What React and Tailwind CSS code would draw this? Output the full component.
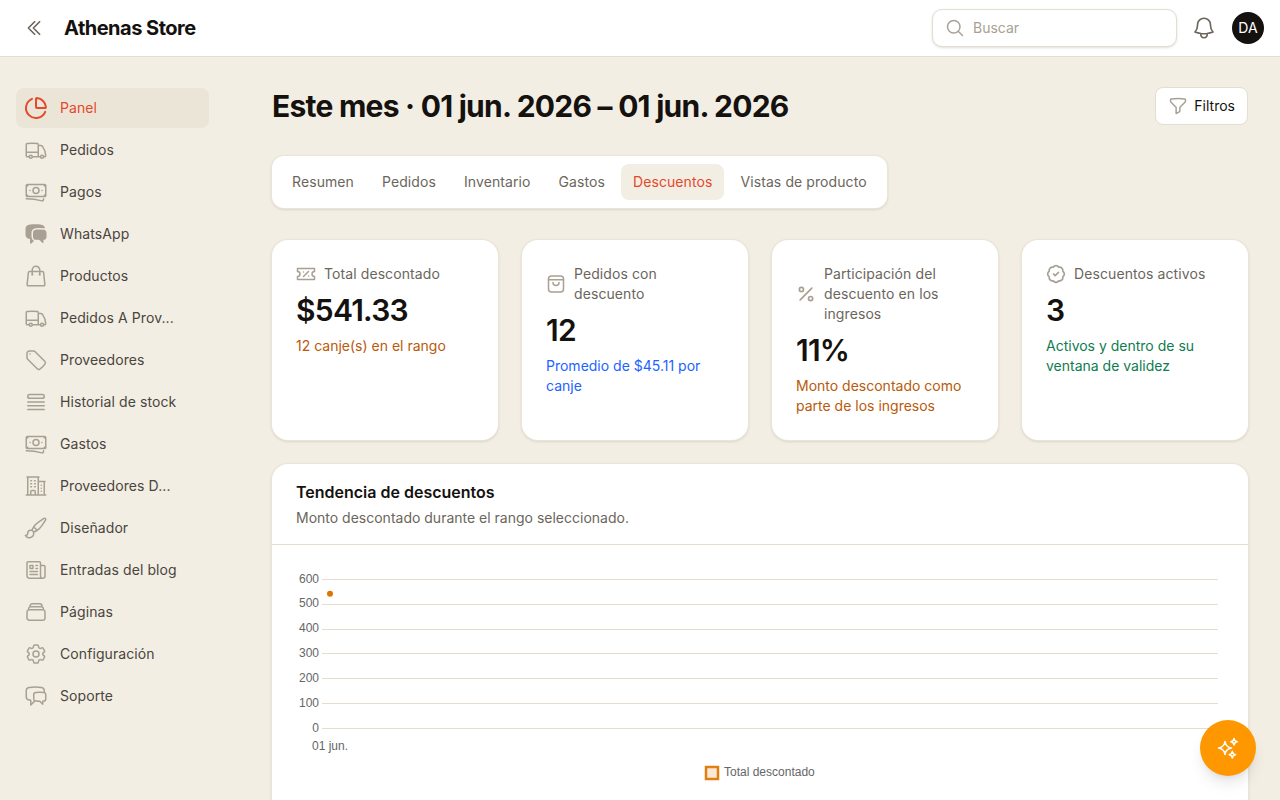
import React from 'react';
import { BadgeCheck, ChartPie, Percent } from 'lucide-react';
import {
  HiChatBubbleLeftRight,
  HiOutlineBanknotes,
  HiOutlineBell,
  HiOutlineBuildingOffice2,
  HiOutlineChatBubbleLeftRight,
  HiOutlineChevronDoubleLeft,
  HiOutlineCog6Tooth,
  HiOutlineFunnel,
  HiOutlineMagnifyingGlass,
  HiOutlineNewspaper,
  HiOutlinePaintBrush,
  HiOutlineQueueList,
  HiOutlineRectangleStack,
  HiOutlineShoppingBag,
  HiOutlineTag,
  HiOutlineTruck,
} from 'react-icons/hi2';

const CouponIcon = ({ className }) => (
  <svg viewBox="0 0 20 20" fill="none" stroke="currentColor" strokeWidth="1.5" strokeLinecap="round" strokeLinejoin="round" className={className}>
    <path d="M1.5 4.5h17v3a2.5 2.5 0 0 0 0 5v3h-17v-3a2.5 2.5 0 0 0 0-5z" />
    <path d="M7.5 12.5l5-5M7.5 8h.01M12.5 12h.01" />
  </svg>
);

const BagIcon = ({ className }) => (
  <svg viewBox="0 0 20 20" fill="none" stroke="currentColor" strokeWidth="1.5" strokeLinecap="round" strokeLinejoin="round" className={className}>
    <rect x="2.5" y="2" width="15" height="16" rx="3" />
    <path d="M2.5 5.8h15M7 8.5a3 3 0 0 0 6 0" />
  </svg>
);

const SparkIcon = ({ className }) => (
  <svg viewBox="0 0 24 24" fill="none" stroke="currentColor" strokeWidth="1.6" strokeLinejoin="round" className={className}>
    <path d="M9 5.5 Q9.8 11.2 15.5 12 Q9.8 12.8 9 18.5 Q8.2 12.8 2.5 12 Q8.2 11.2 9 5.5Z" />
    <path d="M18 2.5 Q18.4 5.3 21.2 5.7 Q18.4 6.1 18 8.9 Q17.6 6.1 14.8 5.7 Q17.6 5.3 18 2.5Z" />
    <path d="M16.3 15.5 Q16.7 18.3 19.5 18.7 Q16.7 19.1 16.3 21.9 Q15.9 19.1 13.1 18.7 Q15.9 18.3 16.3 15.5Z" />
  </svg>
);

const navItems = [
  { label: 'Panel', icon: ChartPie, active: true },
  { label: 'Pedidos', icon: HiOutlineTruck },
  { label: 'Pagos', icon: HiOutlineBanknotes },
  { label: 'WhatsApp', icon: HiChatBubbleLeftRight },
  { label: 'Productos', icon: HiOutlineShoppingBag },
  { label: 'Pedidos A Prov...', icon: HiOutlineTruck },
  { label: 'Proveedores', icon: HiOutlineTag },
  { label: 'Historial de stock', icon: HiOutlineQueueList },
  { label: 'Gastos', icon: HiOutlineBanknotes },
  { label: 'Proveedores D...', icon: HiOutlineBuildingOffice2 },
  { label: 'Diseñador', icon: HiOutlinePaintBrush },
  { label: 'Entradas del blog', icon: HiOutlineNewspaper },
  { label: 'Páginas', icon: HiOutlineRectangleStack },
  { label: 'Configuración', icon: HiOutlineCog6Tooth },
  { label: 'Soporte', icon: HiOutlineChatBubbleLeftRight },
];

const tabs = ['Resumen', 'Pedidos', 'Inventario', 'Gastos', 'Descuentos', 'Vistas de producto'];

const stats = [
  { label: 'Total descontado', value: '$541.33', note: '12 canje(s) en el rango', noteClass: 'text-[#b95a0a]', icon: CouponIcon },
  { label: 'Pedidos con descuento', value: '12', note: 'Promedio de $45.11 por canje', noteClass: 'text-[#1d63ff]', icon: BagIcon },
  { label: 'Participación del descuento en los ingresos', value: '11%', note: 'Monto descontado como parte de los ingresos', noteClass: 'text-[#b95a0a]', icon: Percent },
  { label: 'Descuentos activos', value: '3', note: 'Activos y dentro de su ventana de validez', noteClass: 'text-[#0e7c4f]', icon: BadgeCheck },
];

const gridLines = [
  { label: '600', y: 34.5, textY: 37.5 },
  { label: '500', y: 59.5, textY: 61.5 },
  { label: '400', y: 84.5, textY: 86.5 },
  { label: '300', y: 108.5, textY: 111.5 },
  { label: '200', y: 133.5, textY: 136.5 },
  { label: '100', y: 158.5, textY: 161.5 },
  { label: '0', y: 183.5, textY: 186.5 },
];

const TrendChart = () => (
  <svg width="976" height="300" viewBox="0 0 976 300" className="block" fontFamily="'Liberation Sans', Arial, sans-serif" fontSize="12" fill="#666666">
    {gridLines.map((line) => (
      <g key={line.label}>
        <line x1="50" x2="946" y1={line.y} y2={line.y} stroke="#e4ddd0" strokeWidth="1" />
        <text x="47" y={line.textY} textAnchor="end">{line.label}</text>
      </g>
    ))}
    <circle cx="58" cy="48.7" r="3" fill="#d97706" />
    <text x="58" y="205" textAnchor="middle">01 jun.</text>
    <rect x="434" y="222" width="12" height="12" fill="#fbe7d5" stroke="#e07f12" strokeWidth="2.5" />
    <text x="452" y="231">Total descontado</text>
  </svg>
);

const App = () => {
  return (
    <div className="h-screen overflow-hidden flex flex-col bg-[#f2eee4] font-['Inter',sans-serif] text-[#14110f] relative">
      {/* Top bar */}
      <header className="h-[57px] shrink-0 bg-white border-b border-[#e4ddd0] flex items-center justify-between pl-6 pr-4">
        <div className="flex items-center">
          <HiOutlineChevronDoubleLeft strokeWidth={2} className="w-5 h-5 text-[#6b665c]" />
          <span className="ml-5 text-xl font-bold tracking-tight">Athenas Store</span>
        </div>
        <div className="flex items-center">
          <div className="w-[245px] h-[38px] flex items-center gap-2 px-3 bg-white border border-[#e4ddd0] rounded-[10px] shadow-sm">
            <HiOutlineMagnifyingGlass strokeWidth={1.8} className="w-5 h-5 text-[#a8a193]" />
            <span className="text-sm text-[#a8a193]">Buscar</span>
          </div>
          <HiOutlineBell className="ml-[14px] w-[26px] h-[26px] text-[#6b665c]" />
          <div className="ml-[15px] w-8 h-8 rounded-full bg-[#14110f] text-white text-sm flex items-center justify-center">DA</div>
        </div>
      </header>

      <div className="flex flex-1 min-h-0">
        {/* Sidebar */}
        <nav className="w-[240px] shrink-0 pl-4 pr-[31px] pt-[31px] flex flex-col gap-[2px]">
          {navItems.map((item) => (
            <div
              key={item.label}
              className={`h-10 flex items-center gap-[11px] pl-[8px] rounded-lg text-sm tracking-[0.09px] ${
                item.active ? 'bg-[#ebe5d8] text-[#e5492b]' : 'text-[#4a453d]'
              }`}
            >
              <item.icon className={`w-6 h-6 shrink-0 ${item.active ? 'text-[#e5492b]' : 'text-[#a8a193]'}`} />
              <span className="ml-px truncate">{item.label}</span>
            </div>
          ))}
        </nav>

        {/* Main */}
        <main className="flex-1 min-w-0 px-8 pt-[30px]">
          <div className="flex items-center justify-between h-[38px]">
            <h1 className="text-[30px] font-bold tracking-tight">Este mes · 01 jun. 2026 – 01 jun. 2026</h1>
            <button className="h-[38px] flex items-center gap-1.5 px-3 bg-white border border-[#e4ddd0] rounded-lg text-sm">
              <HiOutlineFunnel strokeWidth={1.8} className="w-5 h-5 text-[#a8a193]" />
              Filtros
            </button>
          </div>

          <div className="mt-[31px] w-fit flex gap-1 p-2 bg-white rounded-xl shadow-[0_0_0_1px_#ebe5d8,0_1px_3px_rgba(60,50,30,0.25)]">
            {tabs.map((tab) => (
              <div
                key={tab}
                className={`h-9 px-3 flex items-center rounded-lg text-sm tracking-[0.09px] ${
                  tab === 'Descuentos' ? 'bg-[#f2eee4] text-[#e5492b]' : 'text-[#6b665c]'
                }`}
              >
                {tab}
              </div>
            ))}
          </div>

          <div className="mt-8 grid grid-cols-4 gap-6">
            {stats.map((stat) => (
              <div key={stat.label} className="h-[200px] p-6 bg-white rounded-2xl shadow-[0_0_0_1px_#ebe5d8,0_1px_3px_rgba(60,50,30,0.25)]">
                <div className="flex items-center gap-2">
                  <stat.icon className="w-5 h-5 shrink-0 text-[#a8a193]" />
                  <span className="text-sm tracking-[0.09px] text-[#6b665c]">{stat.label}</span>
                </div>
                <div className="mt-2 text-[30px] leading-9 font-semibold tracking-tight">{stat.value}</div>
                <p className={`mt-2 text-sm ${stat.noteClass}`}>{stat.note}</p>
              </div>
            ))}
          </div>

          <section className="mt-6 bg-white rounded-2xl shadow-[0_0_0_1px_#ebe5d8,0_1px_3px_rgba(60,50,30,0.25)]">
            <div className="px-6 pt-4 pb-4 border-b border-[#e4ddd0]">
              <h2 className="text-base font-semibold">Tendencia de descuentos</h2>
              <p className="mt-1 text-sm text-[#6b665c]">Monto descontado durante el rango seleccionado.</p>
            </div>
            <TrendChart />
          </section>
        </main>
      </div>

      {/* Floating assistant button */}
      <button className="absolute right-6 bottom-6 w-14 h-14 rounded-full bg-[#ff9800] text-white flex items-center justify-center shadow-lg">
        <SparkIcon className="w-6 h-6" />
      </button>
    </div>
  );
};

export default App;
